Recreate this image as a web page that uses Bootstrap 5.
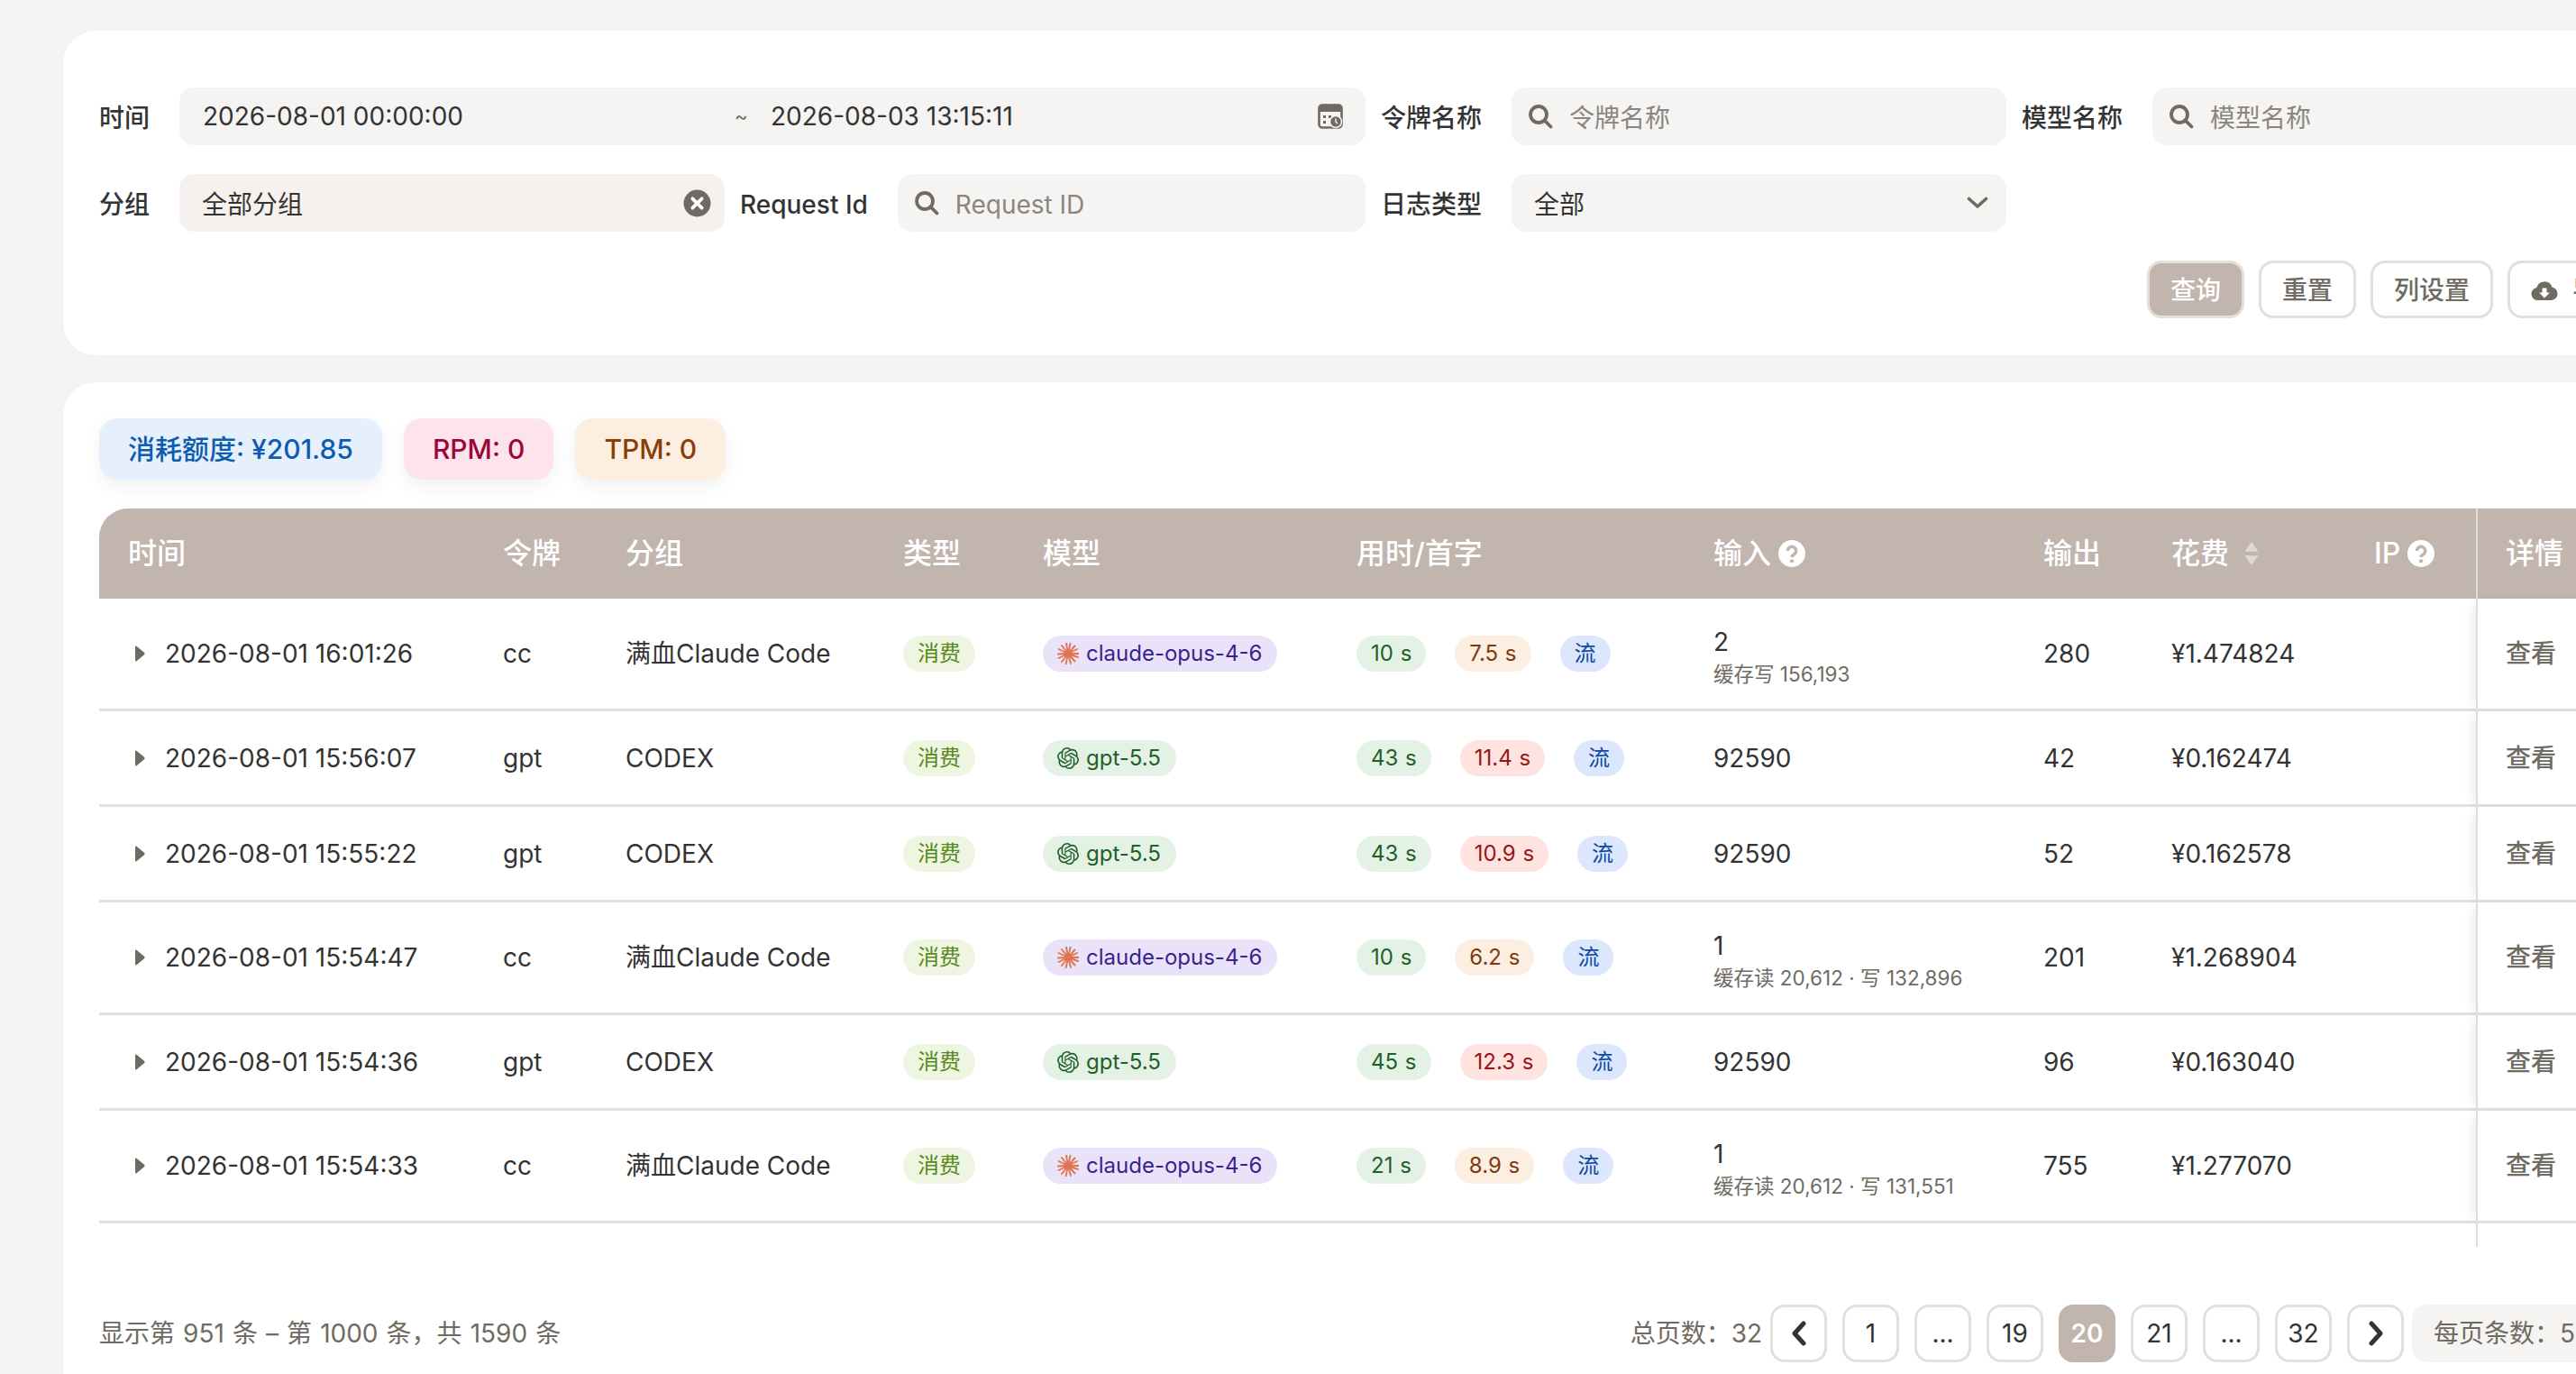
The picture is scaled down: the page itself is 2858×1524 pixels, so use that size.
<!DOCTYPE html>
<html lang="zh-CN">
<head>
    <meta charset="UTF-8">
    <meta name="viewport" content="width=device-width, initial-scale=1.0">
    <title>使用日志</title>
    <link href="https://cdn.jsdelivr.net/npm/bootstrap@5.3.0/dist/css/bootstrap.min.css" rel="stylesheet">
    <style>
        html, body { height: 100%; overflow: hidden; }
        body {
            background: #f5f4f2;
            color: #333;
            font-family: Inter, "Noto Sans CJK SC", sans-serif;
            font-size: 28px;
        }
        .log-page { width: 2906px; margin-left: 70px; padding-top: 34px; }
        .log-panel { background: #fff; border-radius: 36px; padding: 40px; box-shadow: 0 2px 12px rgba(0, 0, 0, .02); }
        .log-panel-filter { padding-top: 63px; padding-bottom: 41px; margin-bottom: 30px; }
        .log-panel-table { height: 1130px; }

        .filter-grid { display: grid; grid-template-columns: repeat(4, 694px); gap: 32px 17px; }
        .filter-span { grid-column: span 2; }
        .filter-label { margin-right: 33px; padding-top: 4px; font-weight: 500; white-space: nowrap; line-height: 60px; }
        .field-box { height: 64px; border-radius: 16px; background: #f5f4f2; padding: 0 18px; min-width: 0; }
        .field-box .form-control {
            background: transparent; border: 0; box-shadow: none; padding: 0;
            font-size: 28px; color: #333; height: 64px; border-radius: 0; font-family: inherit;
        }
        .field-box .form-control::placeholder { color: #8a867f; opacity: 1; }
        .field-search svg { margin-right: 18px; flex: none; }
        .field-search .form-control { padding-top: 3px; }
        .field-date { padding: 0 25px 0 26px; }
        .date-start { flex: 0 0 590px; width: 590px; }
        .date-tilde { width: 14px; margin-right: 26px; font-size: 22px; color: #6f6b63; flex: none; }
        .field-group { background: #f6f1ee; padding: 0 15px 0 25px; }
        .field-type { padding: 0 20px 0 25px; }
        .field-group span, .field-type span { padding-top: 3px; }

        .log-btn {
            height: 64px; padding: 2px 23px 0; border: 3px solid #e3dfd9; border-radius: 16px; background: #fff;
            color: #6f6b63; font-size: 28px; font-weight: 500; line-height: 1;
        }
        .log-btn-primary { background: #c1b5ae; color: #fff; }
        .btn-row { margin-top: 32px; gap: 16px; }

        .stat-chip { height: 68px; padding: 0 32px; border-radius: 20px; line-height: 68px; font-size: 30px; font-weight: 500; box-shadow: 0 8px 20px rgba(0, 0, 0, .06); }
        .chip-blue { background: #e6f0fd; color: #0d5cb0; }
        .chip-pink { background: #fde4ec; color: #9c0538; }
        .chip-orange { background: #fdefe0; color: #8a3d0a; }
        .chip-row { gap: 24px; margin-bottom: 32px; }

        .log-table { table-layout: fixed; width: 2827px; border-collapse: separate; border-spacing: 0; margin-bottom: 0; }
        .cw-time { width: 416px; } .cw-token { width: 136px; } .cw-group { width: 308px; }
        .cw-type { width: 155px; } .cw-model { width: 348px; } .cw-use { width: 396px; }
        .cw-in { width: 366px; } .cw-out { width: 142px; } .cw-cost { width: 225px; }
        .cw-ip { width: 145px; } .cw-act { width: 190px; }
        .log-table > :not(caption) > * > * {
            padding: 31.5px 0 31.5px 32px; border-bottom: 3px solid #e3dfd9; color: #333; background: #fff;
            box-shadow: none; font-size: 28px; line-height: 40px; vertical-align: middle; white-space: nowrap;
        }
        .log-table > thead > tr > th {
            background: #c1b5ae; color: #fff; font-size: 32px; font-weight: 500; height: 100px;
            padding-top: 0; padding-bottom: 0; border-bottom: 0;
        }
        .log-table > thead > tr > th:first-child { border-top-left-radius: 32px; }
        .log-table > thead > tr > th.fixed-col, .log-table > tbody > tr > td.fixed-col { border-left: 2px solid #e0dcd7; padding-left: 31px; }
        .log-table > tbody > tr > td.fixed-col { color: #6f6b63; font-weight: 500; box-shadow: -8px 0 12px -6px rgba(0, 0, 0, .1); }
        .log-table > tbody > tr.log-spacer > td { height: 26px; padding: 0; border-bottom: 0; line-height: 1; }
        .log-table > tbody > tr.log-spacer > td.fixed-col { box-shadow: none; }
        .time-wrap { gap: 22px; padding-left: 7px; }
        .input-main { line-height: 35px; margin-top: -1px; }
        .input-sub { line-height: 35px; margin-bottom: -10px; font-size: 22.5px; color: #6f6b63; }

        .log-tag { display: inline-flex; align-items: center; vertical-align: top; height: 40px; padding: 0 16px; border-radius: 20px; font-size: 24px; line-height: 40px; word-spacing: 1px; }
        .log-tag svg { margin-right: 8px; }
        .tag-lime { background: #eef6e2; color: #568a1c; }
        .tag-green { background: #e4f2e6; color: #1f5f2a; }
        .tag-orange { background: #fdeee2; color: #7e3a0e; }
        .tag-red { background: #fee3e1; color: #9a1414; }
        .tag-blue { background: #dce7fd; color: #0d47a1; }
        .tag-purple { background: #e9e2f8; color: #3a2391; }
        .tag-model { padding-right: 17px; }
        .tag-row { gap: 32px; }

        .head-wrap { gap: 8px; }
        .log-foot { margin-top: 64px; color: #6f6b63; }
        .foot-count { word-spacing: 1.2px; }
        .page-wrap { gap: 9px; }
        .log-pager { gap: 17px; margin: 0; }
        .log-pager .page-item .page-link {
            display: flex; align-items: center; justify-content: center; width: 63px; height: 64px; padding: 0; margin-left: 0;
            border: 3px solid #e3dfd9; border-radius: 16px; background: #fff; color: #333; font-size: 28px;
        }
        .log-pager .page-item.active .page-link { background: #c1b5ae; border-color: #c1b5ae; color: #fff; font-weight: 600; }
        .page-size { width: 260px; height: 64px; line-height: 64px; padding-left: 24px; border-radius: 16px; background: #f5f4f2; color: #6f6b63; white-space: nowrap; }
    </style>
</head>
<body>

<svg width="0" height="0" class="d-block position-absolute">
    <symbol id="ic-search" viewBox="0 0 28 28"><circle cx="12" cy="12" r="9" fill="none" stroke="#6f6b63" stroke-width="3.8"/><path d="M19 19l6.500 6.500" stroke="#6f6b63" stroke-width="3.8" stroke-linecap="round"/></symbol>
    <symbol id="ic-help" viewBox="0 0 28 28"><circle cx="14" cy="14" r="14" fill="#fff"/><path d="M9.800 11.200a4.300 4.300 0 1 1 6.600 3.600c-1.500 1-2.400 1.500-2.400 3" fill="none" stroke="#c1b5ae" stroke-width="3.2"/><circle cx="14" cy="21.800" r="2" fill="#c1b5ae"/></symbol>
    <symbol id="ic-expand" viewBox="0 0 12 18"><path d="M1 1.500c0-1 .8-1.300 1.500-.7l8.500 7c.7.6.7 1.800 0 2.400l-8.500 7c-.7.6-1.500.3-1.500-.7z" fill="#6f6b63"/></symbol>
    <symbol id="ic-claude" viewBox="0 0 24 24"><path d="M12 12L23.500 12M12 12L22 7M12 12L19.500 3.500M12 12L14.500 .7M12 12L10 .5M12 12L5 3M12 12L1.500 7M12 12L.5 12.500M12 12L1.500 17M12 12L5 21M12 12L9.700 23.300M12 12L15 23M12 12L19.500 20.500M12 12L23 16" stroke="#df7550" stroke-width="1.9" stroke-linecap="round"/><circle cx="12" cy="12" r="3" fill="#df7550"/></symbol>
    <symbol id="ic-openai" viewBox="0 0 24 24"><path fill="#1f5f2a" d="M22.2819 9.8211a5.9847 5.9847 0 0 0-.5157-4.9108 6.0462 6.0462 0 0 0-6.5098-2.9A6.0651 6.0651 0 0 0 4.9807 4.1818a5.9847 5.9847 0 0 0-3.9977 2.9 6.0462 6.0462 0 0 0 .7427 7.0966 5.98 5.98 0 0 0 .511 4.9107 6.051 6.051 0 0 0 6.5146 2.9001A5.9847 5.9847 0 0 0 13.2599 24a6.0557 6.0557 0 0 0 5.7718-4.2058 5.9894 5.9894 0 0 0 3.9977-2.9001 6.0557 6.0557 0 0 0-.7475-7.0729zm-9.022 12.6081a4.4755 4.4755 0 0 1-2.8764-1.0408l.1419-.0804 4.7783-2.7582a.7948.7948 0 0 0 .3927-.6813v-6.7369l2.02 1.1686a.071.071 0 0 1 .038.052v5.5826a4.504 4.504 0 0 1-4.4945 4.4944zm-9.6607-4.1254a4.4708 4.4708 0 0 1-.5346-3.0137l.142.0852 4.783 2.7582a.7712.7712 0 0 0 .7806 0l5.8428-3.3685v2.3324a.0804.0804 0 0 1-.0332.0615L9.74 19.9502a4.4992 4.4992 0 0 1-6.1408-1.6464zM2.3408 7.8956a4.485 4.485 0 0 1 2.3655-1.9728V11.6a.7664.7664 0 0 0 .3879.6765l5.8144 3.3543-2.0201 1.1685a.0757.0757 0 0 1-.071 0l-4.8303-2.7865A4.504 4.504 0 0 1 2.3408 7.872zm16.5963 3.8558L13.1038 8.364 15.1192 7.2a.0757.0757 0 0 1 .071 0l4.8303 2.7913a4.4944 4.4944 0 0 1-.6765 8.1042v-5.6772a.79.79 0 0 0-.407-.667zm2.0107-3.0231l-.142-.0852-4.7735-2.7818a.7759.7759 0 0 0-.7854 0L9.409 9.2297V6.8974a.0662.0662 0 0 1 .0284-.0615l4.8303-2.7866a4.4992 4.4992 0 0 1 6.6802 4.66zM8.3065 12.863l-2.02-1.1638a.0804.0804 0 0 1-.038-.0567V6.0742a4.4992 4.4992 0 0 1 7.3757-3.4537l-.142.0805L8.704 5.459a.7948.7948 0 0 0-.3927.6813zm1.0976-2.3654l2.602-1.4998 2.6069 1.4998v2.9994l-2.5974 1.4997-2.6067-1.4997Z"/></symbol>
</svg>

<div class="log-page">

    <!-- filters -->
    <div class="log-panel log-panel-filter">
        <div class="filter-grid">
            <div class="d-flex filter-span">
                <label class="filter-label">时间</label>
                <div class="field-box field-date d-flex align-items-center flex-grow-1">
                    <input class="form-control date-start" value="2026-08-01 00:00:00">
                    <span class="date-tilde">~</span>
                    <input class="form-control flex-grow-1" value="2026-08-03 13:15:11">
                    <svg width="28" height="28" viewBox="0 0 28 28" class="flex-shrink-0">
                        <rect x="1.500" y="1.500" width="25" height="25" rx="3.500" fill="none" stroke="#6f6b63" stroke-width="2.600"/>
                        <path d="M1.500 5a3.500 3.500 0 0 1 3.500-3.500h18a3.500 3.500 0 0 1 3.500 3.500v4h-25z" fill="#6f6b63"/>
                        <path d="M6 13h3v3H6zM12 13h3v3h-3zM6 19h3v3H6z" fill="#6f6b63"/>
                        <circle cx="20" cy="20" r="6.500" fill="#6f6b63" stroke="#f5f4f2" stroke-width="1.500"/>
                        <path d="M20 16.500V20l2 2" stroke="#f5f4f2" stroke-width="1.500" fill="none"/>
                    </svg>
                </div>
            </div>
            <div class="d-flex">
                <label class="filter-label">令牌名称</label>
                <div class="field-box field-search d-flex align-items-center flex-grow-1">
                    <svg width="28" height="28"><use href="#ic-search"/></svg>
                    <input class="form-control" placeholder="令牌名称">
                </div>
            </div>
            <div class="d-flex">
                <label class="filter-label">模型名称</label>
                <div class="field-box field-search d-flex align-items-center flex-grow-1">
                    <svg width="28" height="28"><use href="#ic-search"/></svg>
                    <input class="form-control" placeholder="模型名称">
                </div>
            </div>
            <div class="d-flex">
                <label class="filter-label">分组</label>
                <div class="field-box field-group d-flex align-items-center justify-content-between flex-grow-1">
                    <span>全部分组</span>
                    <svg width="31" height="31" viewBox="0 0 30 30">
                        <circle cx="15" cy="15" r="14.500" fill="#6f6b63"/>
                        <path d="M10 10l10 10M20 10L10 20" stroke="#fff" stroke-width="3.600" stroke-linecap="round"/>
                    </svg>
                </div>
            </div>
            <div class="d-flex">
                <label class="filter-label">Request Id</label>
                <div class="field-box field-search d-flex align-items-center flex-grow-1">
                    <svg width="28" height="28"><use href="#ic-search"/></svg>
                    <input class="form-control" placeholder="Request ID">
                </div>
            </div>
            <div class="d-flex">
                <label class="filter-label">日志类型</label>
                <div class="field-box field-type d-flex align-items-center justify-content-between flex-grow-1">
                    <span>全部</span>
                    <svg width="24" height="14" viewBox="0 0 24 14"><path d="M2.500 2.500L12 11l9.500-8.500" fill="none" stroke="#6f6b63" stroke-width="3.600" stroke-linecap="round" stroke-linejoin="round"/></svg>
                </div>
            </div>
        </div>
        <div class="btn-row d-flex justify-content-end">
            <button class="btn log-btn log-btn-primary">查询</button>
            <button class="btn log-btn">重置</button>
            <button class="btn log-btn">列设置</button>
            <button class="btn log-btn d-flex align-items-center gap-3">
                <svg width="30" height="24" viewBox="0 0 30 24">
                    <path d="M7.500 23a7 7 0 0 1-1.200-13.900A9 9 0 0 1 23.500 8.400 7.400 7.400 0 0 1 23 23z" fill="#6f6b63"/>
                    <path d="M12.500 9.500h5v5h3.500L15 20.500 9 14.500h3.500z" fill="#fff"/>
                </svg>
                <span>导出</span>
            </button>
        </div>
    </div>

    <!-- log table -->
    <div class="log-panel log-panel-table">
        <div class="chip-row d-flex">
            <div class="stat-chip chip-blue">消耗额度: ¥201.85</div>
            <div class="stat-chip chip-pink">RPM: 0</div>
            <div class="stat-chip chip-orange">TPM: 0</div>
        </div>

        <table class="table log-table">
            <colgroup>
                <col class="cw-time"><col class="cw-token"><col class="cw-group"><col class="cw-type"><col class="cw-model"><col class="cw-use"><col class="cw-in"><col class="cw-out"><col class="cw-cost"><col class="cw-ip"><col class="cw-act">
            </colgroup>
            <thead>
                <tr>
                    <th>时间</th>
                    <th>令牌</th>
                    <th>分组</th>
                    <th>类型</th>
                    <th>模型</th>
                    <th>用时/首字</th>
                    <th><span class="head-wrap d-inline-flex align-items-center">输入 <svg width="30" height="30"><use href="#ic-help"/></svg></span></th>
                    <th>输出</th>
                    <th>
                        <span class="head-wrap d-inline-flex align-items-center gap-3">花费
                            <svg width="18" height="28" viewBox="0 0 16 26"><path d="M8 1l7 10H1zM8 25L1 15h14z" fill="#fff" fill-opacity=".5"/></svg>
                        </span>
                    </th>
                    <th><span class="head-wrap d-inline-flex align-items-center">IP <svg width="30" height="30"><use href="#ic-help"/></svg></span></th>
                    <th class="fixed-col">详情</th>
                </tr>
            </thead>
            <tbody>
                <tr>
                    <td><div class="time-wrap d-flex align-items-center"><svg width="12" height="18"><use href="#ic-expand"/></svg>2026-08-01 16:01:26</div></td>
                    <td>cc</td>
                    <td>满血Claude Code</td>
                    <td><span class="log-tag tag-lime">消费</span></td>
                    <td><span class="log-tag tag-model tag-purple"><svg width="24" height="24"><use href="#ic-claude"/></svg>claude-opus-4-6</span></td>
                    <td><div class="tag-row d-flex"><span class="log-tag tag-green">10 s</span><span class="log-tag tag-orange">7.5 s</span><span class="log-tag tag-blue">流</span></div></td>
                    <td><div class="input-main">2</div><div class="input-sub">缓存写 156,193</div></td>
                    <td>280</td>
                    <td>¥1.474824</td>
                    <td></td>
                    <td class="fixed-col">查看</td>
                </tr>
                <tr>
                    <td><div class="time-wrap d-flex align-items-center"><svg width="12" height="18"><use href="#ic-expand"/></svg>2026-08-01 15:56:07</div></td>
                    <td>gpt</td>
                    <td>CODEX</td>
                    <td><span class="log-tag tag-lime">消费</span></td>
                    <td><span class="log-tag tag-model tag-green"><svg width="24" height="24"><use href="#ic-openai"/></svg>gpt-5.5</span></td>
                    <td><div class="tag-row d-flex"><span class="log-tag tag-green">43 s</span><span class="log-tag tag-red">11.4 s</span><span class="log-tag tag-blue">流</span></div></td>
                    <td>92590</td>
                    <td>42</td>
                    <td>¥0.162474</td>
                    <td></td>
                    <td class="fixed-col">查看</td>
                </tr>
                <tr>
                    <td><div class="time-wrap d-flex align-items-center"><svg width="12" height="18"><use href="#ic-expand"/></svg>2026-08-01 15:55:22</div></td>
                    <td>gpt</td>
                    <td>CODEX</td>
                    <td><span class="log-tag tag-lime">消费</span></td>
                    <td><span class="log-tag tag-model tag-green"><svg width="24" height="24"><use href="#ic-openai"/></svg>gpt-5.5</span></td>
                    <td><div class="tag-row d-flex"><span class="log-tag tag-green">43 s</span><span class="log-tag tag-red">10.9 s</span><span class="log-tag tag-blue">流</span></div></td>
                    <td>92590</td>
                    <td>52</td>
                    <td>¥0.162578</td>
                    <td></td>
                    <td class="fixed-col">查看</td>
                </tr>
                <tr>
                    <td><div class="time-wrap d-flex align-items-center"><svg width="12" height="18"><use href="#ic-expand"/></svg>2026-08-01 15:54:47</div></td>
                    <td>cc</td>
                    <td>满血Claude Code</td>
                    <td><span class="log-tag tag-lime">消费</span></td>
                    <td><span class="log-tag tag-model tag-purple"><svg width="24" height="24"><use href="#ic-claude"/></svg>claude-opus-4-6</span></td>
                    <td><div class="tag-row d-flex"><span class="log-tag tag-green">10 s</span><span class="log-tag tag-orange">6.2 s</span><span class="log-tag tag-blue">流</span></div></td>
                    <td><div class="input-main">1</div><div class="input-sub">缓存读 20,612 · 写 132,896</div></td>
                    <td>201</td>
                    <td>¥1.268904</td>
                    <td></td>
                    <td class="fixed-col">查看</td>
                </tr>
                <tr>
                    <td><div class="time-wrap d-flex align-items-center"><svg width="12" height="18"><use href="#ic-expand"/></svg>2026-08-01 15:54:36</div></td>
                    <td>gpt</td>
                    <td>CODEX</td>
                    <td><span class="log-tag tag-lime">消费</span></td>
                    <td><span class="log-tag tag-model tag-green"><svg width="24" height="24"><use href="#ic-openai"/></svg>gpt-5.5</span></td>
                    <td><div class="tag-row d-flex"><span class="log-tag tag-green">45 s</span><span class="log-tag tag-red">12.3 s</span><span class="log-tag tag-blue">流</span></div></td>
                    <td>92590</td>
                    <td>96</td>
                    <td>¥0.163040</td>
                    <td></td>
                    <td class="fixed-col">查看</td>
                </tr>
                <tr>
                    <td><div class="time-wrap d-flex align-items-center"><svg width="12" height="18"><use href="#ic-expand"/></svg>2026-08-01 15:54:33</div></td>
                    <td>cc</td>
                    <td>满血Claude Code</td>
                    <td><span class="log-tag tag-lime">消费</span></td>
                    <td><span class="log-tag tag-model tag-purple"><svg width="24" height="24"><use href="#ic-claude"/></svg>claude-opus-4-6</span></td>
                    <td><div class="tag-row d-flex"><span class="log-tag tag-green">21 s</span><span class="log-tag tag-orange">8.9 s</span><span class="log-tag tag-blue">流</span></div></td>
                    <td><div class="input-main">1</div><div class="input-sub">缓存读 20,612 · 写 131,551</div></td>
                    <td>755</td>
                    <td>¥1.277070</td>
                    <td></td>
                    <td class="fixed-col">查看</td>
                </tr>
                <tr class="log-spacer">
                    <td colspan="10"></td>
                    <td class="fixed-col"></td>
                </tr>
            </tbody>
        </table>

        <div class="log-foot d-flex justify-content-between align-items-center">
            <div class="foot-count">显示第 951 条 – 第 1000 条，共 1590 条</div>
            <div class="page-wrap d-flex align-items-center">
                <span>总页数：32</span>
                <ul class="pagination log-pager">
                    <li class="page-item"><a class="page-link" href="#"><svg width="20" height="28" viewBox="0 0 20 28"><path d="M15 3L5 14l10 11" fill="none" stroke="#333" stroke-width="5" stroke-linecap="round" stroke-linejoin="round"/></svg></a></li>
                    <li class="page-item"><a class="page-link" href="#">1</a></li>
                    <li class="page-item"><a class="page-link" href="#">...</a></li>
                    <li class="page-item"><a class="page-link" href="#">19</a></li>
                    <li class="page-item active"><a class="page-link" href="#">20</a></li>
                    <li class="page-item"><a class="page-link" href="#">21</a></li>
                    <li class="page-item"><a class="page-link" href="#">...</a></li>
                    <li class="page-item"><a class="page-link" href="#">32</a></li>
                    <li class="page-item"><a class="page-link" href="#"><svg width="20" height="28" viewBox="0 0 20 28"><path d="M5 3l10 11L5 25" fill="none" stroke="#333" stroke-width="5" stroke-linecap="round" stroke-linejoin="round"/></svg></a></li>
                </ul>
                <div class="page-size">每页条数：50</div>
            </div>
        </div>
    </div>
</div>

<script src="https://cdn.jsdelivr.net/npm/bootstrap@5.3.0/dist/js/bootstrap.bundle.min.js"></script>
</body>
</html>
